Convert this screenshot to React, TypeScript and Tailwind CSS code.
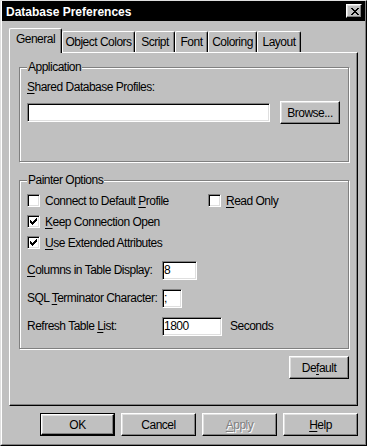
import type { ReactNode } from 'react';

// Win95-style "Database Preferences" property sheet

function U({ children }: { children: ReactNode }) {
	return <span className="underline decoration-1 underline-offset-[2px]">{children}</span>;
}

const raised =
	'bg-[#c0c0c0] border border-t-white border-l-white border-r-black border-b-black shadow-[inset_-1px_-1px_0_#808080,inset_1px_1px_0_#dfdfdf]';
const sunken =
	'bg-white border border-t-[#808080] border-l-[#808080] border-r-white border-b-white shadow-[inset_1px_1px_0_#000,inset_-1px_-1px_0_#dfdfdf]';
const etched =
	'border border-[#808080] shadow-[1px_1px_0_#fff,inset_1px_1px_0_#fff] m-0 min-w-0';

function CheckMark() {
	return (
		<svg width="7" height="7" viewBox="0 0 7 7" shapeRendering="crispEdges">
			<path
				fill="#000"
				d="M6 0h1v1H6z M5 1h2v1H5z M0 2h1v1H0z M4 2h3v1H4z M0 3h2v1H0z M3 3h3v1H3z M0 4h5v1H0z M1 5h3v1H1z M2 6h1v1H2z"
			/>
		</svg>
	);
}

function Checkbox({ checked, children, className = '' }: { checked?: boolean; children: ReactNode; className?: string }) {
	return (
		<div className={`flex items-center gap-[5px] h-[13px] ${className}`}>
			<div className={`w-[13px] h-[13px] flex items-center justify-center ${sunken}`}>
				{checked && <CheckMark />}
			</div>
			<span>{children}</span>
		</div>
	);
}

function FieldRow({ label, value, inputW, suffix }: { label: ReactNode; value: string; inputW: string; suffix?: string }) {
	return (
		<div className="flex items-center h-[20px]">
			<span className="w-[135px]">{label}</span>
			<div className={`h-[19px] pl-[1px] flex items-center ${inputW} ${sunken}`}>{value}</div>
			{suffix && <span className="ml-[8px]">{suffix}</span>}
		</div>
	);
}

export default function App() {
	const tabs = [
		{ label: 'General', w: 'w-[53px]', active: true },
		{ label: 'Object Colors', w: 'w-[73px]' },
		{ label: 'Script', w: 'w-[40px]' },
		{ label: 'Font', w: 'w-[33px]' },
		{ label: 'Coloring', w: 'w-[49px]' },
		{ label: 'Layout', w: 'w-[44px]' },
	];

	return (
		<div className="w-[367px] h-[446px] overflow-hidden bg-[#c0c0c0] border border-t-[#dfdfdf] border-l-[#dfdfdf] border-r-black border-b-black font-['Liberation_Sans',Arial,sans-serif] text-[12px] leading-[14px] tracking-[-0.5px] text-black select-none">
			<div className="h-full flex flex-col border-l border-l-white border-r border-r-[#808080] border-b border-b-[#808080]">
				{/* Title bar */}
				<div className="h-[20px] shrink-0 bg-black flex items-center justify-between">
					<span className="pl-[4px] pt-[2px] font-bold text-white tracking-normal">Database Preferences</span>
					<div className={`mr-[3px] w-[16px] h-[14px] flex items-center justify-center pl-[1px] ${raised}`}>
						<svg width="8" height="7" viewBox="0 0 8 7" shapeRendering="crispEdges">
							<path
								fill="#000"
								d="M0 0h2v1H0z M6 0h2v1H6z M1 1h2v1H1z M5 1h2v1H5z M2 2h4v1H2z M3 3h2v1H3z M2 4h4v1H2z M1 5h2v1H1z M5 5h2v1H5z M0 6h2v1H0z M6 6h2v1H6z"
							/>
						</svg>
					</div>
				</div>

				{/* Tabs */}
				<div className="mt-[7px] h-[25px] pl-[7px] flex items-end shrink-0">
					{tabs.map((t) => (
						<div
							key={t.label}
							className={`${t.w} ${
								t.active ? 'relative z-10 h-[25px]' : 'h-[22px]'
							} pt-[3px] bg-[#c0c0c0] flex justify-center border-l border-t border-r border-l-white border-t-white border-r-black rounded-t-[2px] shadow-[inset_-1px_0_0_#808080]`}
						>
							{t.label}
						</div>
					))}
				</div>

				{/* Tab panel */}
				<div className="ml-[7px] -mt-[1px] w-[349px] h-[354px] shrink-0 flex flex-col border border-t-white border-l-white border-r-black border-b-black shadow-[inset_-1px_-1px_0_#808080]">
					<fieldset className={`ml-[9px] mr-[8px] mt-[8px] pl-[7px] pr-[8px] pt-[6px] pb-[37px] ${etched}`}>
						<legend className="px-[1px] bg-[#c0c0c0] leading-[13px]">Application</legend>
						<div className="h-[14px]">
							<U>S</U>hared Database Profiles:
						</div>
						<div className="mt-[7px] h-[23px] flex items-center justify-between">
							<div className={`w-[243px] h-[19px] ${sunken}`} />
							<div className={`w-[60px] h-[23px] flex items-center justify-center ${raised}`}>Browse...</div>
						</div>
					</fieldset>

					<fieldset className={`ml-[9px] mr-[8px] mt-[12px] pl-[7px] pr-[8px] pt-[7px] pb-[12px] ${etched}`}>
						<legend className="px-[1px] bg-[#c0c0c0] leading-[13px]">Painter Options</legend>
						<div className="flex flex-col gap-[8px]">
							<div className="flex">
								<Checkbox className="w-[181px]">
									Connect to Default <U>P</U>rofile
								</Checkbox>
								<Checkbox>
									<U>R</U>ead Only
								</Checkbox>
							</div>
							<Checkbox checked>
								<U>K</U>eep Connection Open
							</Checkbox>
							<Checkbox checked>
								<U>U</U>se Extended Attributes
							</Checkbox>
						</div>
						<div className="mt-[11px] flex flex-col gap-[8px]">
							<FieldRow
								label={
									<>
										<U>C</U>olumns in Table Display:
									</>
								}
								value="8"
								inputW="w-[35px]"
							/>
							<FieldRow
								label={
									<>
										SQL <U>T</U>erminator Character:
									</>
								}
								value=";"
								inputW="w-[20px]"
							/>
							<FieldRow
								label={
									<>
										Refresh Table <U>L</U>ist:
									</>
								}
								value="1800"
								inputW="w-[60px]"
								suffix="Seconds"
							/>
						</div>
					</fieldset>

					<div className={`mt-[7px] mr-[8px] self-end w-[60px] h-[23px] flex items-center justify-center ${raised}`}>
						De<U>f</U>ault
					</div>
				</div>

				{/* Dialog buttons */}
				<div className="mt-[7px] pr-[7px] flex justify-end gap-[6px]">
					<div className="w-[75px] h-[23px] border border-black">
						<div className={`w-full h-full flex items-center justify-center ${raised}`}>OK</div>
					</div>
					<div className={`w-[75px] h-[23px] flex items-center justify-center ${raised}`}>Cancel</div>
					<div className={`w-[75px] h-[23px] flex items-center justify-center text-[#808080] [text-shadow:1px_1px_0_#fff] ${raised}`}>
						<U>A</U>pply
					</div>
					<div className={`w-[75px] h-[23px] flex items-center justify-center ${raised}`}>
						<U>H</U>elp
					</div>
				</div>
			</div>
		</div>
	);
}
